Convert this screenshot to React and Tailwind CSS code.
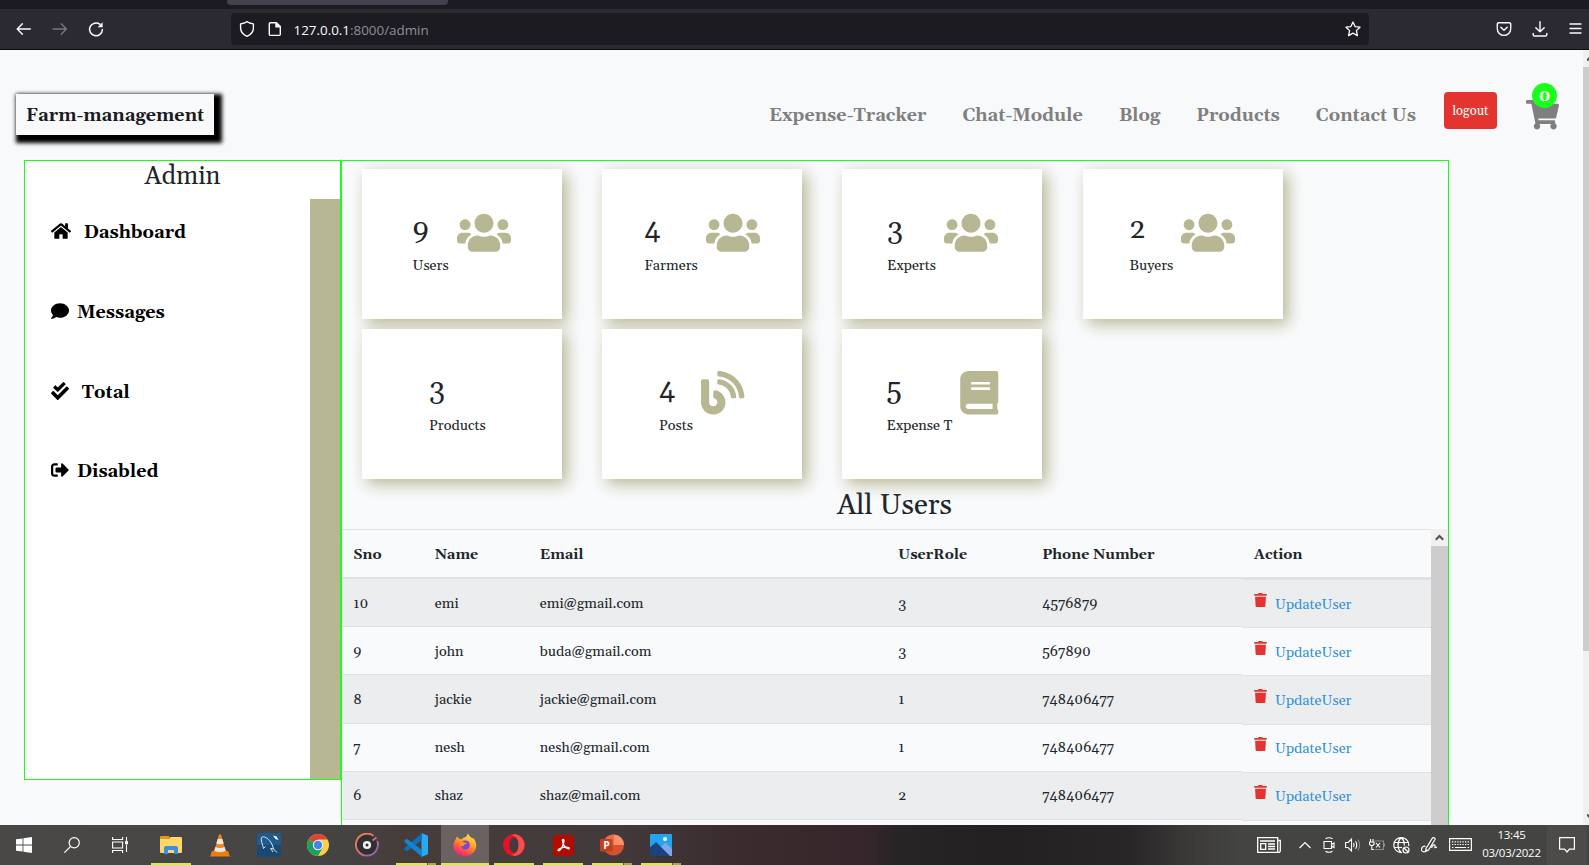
import {
  FaUsers,
  FaBlog,
  FaBook,
  FaHome,
  FaComment,
  FaCheckDouble,
  FaSignOutAlt,
  FaTrash,
  FaShoppingCart,
} from 'react-icons/fa';

/* ---------- browser chrome ---------- */

function BrowserBar() {
  return (
    <header className="h-[50px] shrink-0 border-b border-[#0c0c0d] bg-[#2b2a33] text-[#fbfbfe]">
      <div className="h-[9px] bg-[#1c1b22] pl-[227px]">
        <div className="h-[5px] w-[221px] rounded-b-[4px] bg-[#42414d]" />
      </div>
      <div className="flex h-10 items-center pl-4">
        <svg className="h-4 w-4" viewBox="0 0 16 16" fill="none" stroke="currentColor" strokeWidth="1.4" strokeLinecap="round" strokeLinejoin="round">
          <path d="M14.3 8H1.2M6.4 2.8 1.2 8l5.2 5.2" />
        </svg>
        <svg className="ml-5 h-4 w-4 text-[#77767e]" viewBox="0 0 16 16" fill="none" stroke="currentColor" strokeWidth="1.4" strokeLinecap="round" strokeLinejoin="round">
          <path d="M1 8h13.4M9.2 2.8 14.4 8l-5.2 5.2" />
        </svg>
        <svg className="ml-5 h-4 w-4" viewBox="0 0 16 16" fill="none" stroke="currentColor" strokeWidth="1.5" strokeLinecap="round">
          <path d="M11.800 3.200A6.400 6.400 0 1 0 14.400 8.500" />
          <path d="M14.600 1.300v5h-5z" fill="currentColor" stroke="none" />
        </svg>
        <div className="ml-[127px] flex h-8 w-[1138px] items-center rounded-[4px] bg-[#1c1b22] pl-2">
          <svg className="h-4 w-4" viewBox="0 0 16 16" fill="none" stroke="currentColor" strokeWidth="1.4" strokeLinejoin="round">
            <path d="M8 .6 10.500 2l3.900.9v4c0 3.800-2.400 6.600-6.400 8.500-4-1.900-6.400-4.700-6.400-8.500v-4L5.500 2z" />
          </svg>
          <svg className="ml-3 h-4 w-4" viewBox="0 0 16 16" fill="none" stroke="currentColor" strokeWidth="1.4" strokeLinejoin="round">
            <path d="M3.500 1.700h6l3.800 3.800v7.700a1.200 1.200 0 0 1-1.200 1.200H3.500a1.200 1.200 0 0 1-1.200-1.200V2.900a1.200 1.200 0 0 1 1.200-1.200z" />
            <path d="M9 1.700v4.200h4.200z" fill="currentColor" />
          </svg>
          <span className="mt-0.5 ml-[10.500px] font-['Open_Sans',sans-serif] text-[13.400px] text-[#8f8e96]">
            <span className="text-[#fbfbfe]">127.0.0.1</span>:8000/admin
          </span>
          <svg className="mr-2 ml-auto h-4 w-4" viewBox="0 0 16 16" fill="none" stroke="currentColor" strokeWidth="1.3" strokeLinejoin="round">
            <path d="m8 1 2.100 4.600 4.900.6-3.600 3.400 1 5L8 12.100l-4.400 2.500 1-5L1 6.200l4.900-.6z" />
          </svg>
        </div>
        <svg className="ml-[127px] h-4 w-4" viewBox="0 0 16 16" fill="none" stroke="currentColor" strokeWidth="1.4" strokeLinecap="round" strokeLinejoin="round">
          <path d="M2.500 1.800h11a1.200 1.200 0 0 1 1.200 1.200v4.700a6.700 6.700 0 0 1-13.400 0V3a1.200 1.200 0 0 1 1.200-1.200z" />
          <path d="M4.800 6.200 8 9.300l3.200-3.100" />
        </svg>
        <svg className="ml-5 h-4 w-4" viewBox="0 0 16 16" fill="none" stroke="currentColor" strokeWidth="1.4" strokeLinecap="round" strokeLinejoin="round">
          <path d="M8 .8v10M3.800 6.700 8 10.800l4.200-4.100M1.200 12.500v1.200c0 .8.500 1.300 1.300 1.300h11c.8 0 1.300-.5 1.300-1.300v-1.200" />
        </svg>
        <svg className="ml-[21px] h-4 w-[13px]" viewBox="0 0 13 16" fill="none" stroke="currentColor" strokeWidth="1.3" strokeLinecap="round">
          <path d="M1 3h11M1 7.500h11M1 12h11" />
        </svg>
      </div>
    </header>
  );
}

/* ---------- site header ---------- */

function SiteHeader() {
  return (
    <div className="flex h-[105px] items-start bg-[#f8f9fb] pl-4 text-[18px] leading-7 font-bold">
      <a className="mt-11 h-[41px] w-[198px] bg-[#f8f9fb] pt-2 pl-2.5 text-[#1b1b1e] shadow-[4px_4px_4px_4px_#000]">
        Farm-management
      </a>
      <nav className="mt-[52px] ml-[555px] flex w-[647px] justify-between text-[#7f7f7f]">
        <a>Expense-Tracker</a>
        <a>Chat-Module</a>
        <a>Blog</a>
        <a>Products</a>
        <a>Contact Us</a>
      </nav>
      <button className="mt-[42px] ml-7 h-[37px] w-[53px] rounded-[4px] bg-[#e3342f] text-[12.960px] font-normal text-white">
        logout
      </button>
      <div className="relative mt-[50px] ml-[29px] text-[#7f7f7f]">
        <FaShoppingCart className="h-[29.500px] w-[33px]" />
        <span className="absolute -top-[17.500px] left-[6px] flex h-[25px] w-[25px] items-center justify-center rounded-full bg-[#1aff1a] pt-0.5 text-[16px] leading-none text-white">
          0
        </span>
      </div>
    </div>
  );
}

/* ---------- sidebar ---------- */

function SideLink({ icon: Icon, label, iconClass, className }) {
  return (
    <li className={`flex h-20 items-start text-[18px] leading-7 font-bold text-black ${className ?? ''}`}>
      <Icon className={`mt-[3px] h-[18px] ${iconClass}`} />
      {label}
    </li>
  );
}

function Sidebar() {
  return (
    <aside className="flex h-[620px] w-[317px] shrink-0 flex-col border border-[#1aff1a] bg-white">
      <h3 className="h-[38px] pt-px text-center text-[25.2px] leading-[30px]">Admin</h3>
      <div className="flex flex-1">
        <ul className="flex-1 pt-5 pl-[26px]">
          <SideLink icon={FaHome} label="Dashboard" iconClass="mr-[12.750px] w-[20px]" />
          <SideLink icon={FaComment} label="Messages" iconClass="mr-2 w-[18px]" />
          <SideLink icon={FaCheckDouble} label="Total" iconClass="mr-[12.750px] w-[18px]" />
          <SideLink icon={FaSignOutAlt} label="Disabled" iconClass="mr-2 w-[18px]" className="-mt-px" />
        </ul>
        <div className="w-[30px] bg-[#b8b794]" />
      </div>
    </aside>
  );
}

/* ---------- cards ---------- */

const cards = [
  { value: 9, label: 'Users', icon: FaUsers, pad: 'pl-[50.500px]', iconBox: 'left-[94.500px] w-[54px]' },
  { value: 4, label: 'Farmers', icon: FaUsers, pad: 'pl-[42.250px]', iconBox: 'left-[103.500px] w-[54px]' },
  { value: 3, label: 'Experts', icon: FaUsers, pad: 'pl-[45px]', iconBox: 'left-[101.500px] w-[54px]' },
  { value: 2, label: 'Buyers', icon: FaUsers, pad: 'pl-[46.500px]', iconBox: 'left-[98px] w-[54px]' },
  { value: 3, label: 'Products', icon: null, pad: 'pl-[67px]', iconBox: '' },
  { value: 4, label: 'Posts', icon: FaBlog, pad: 'pl-[57px]', iconBox: 'left-[99px] w-[43.500px]' },
  { value: 5, label: 'Expense T', icon: FaBook, pad: 'pl-[44.500px]', iconBox: 'left-[118px] w-[38.500px]' },
];

function StatCard({ value, label, icon: Icon, pad, iconBox }) {
  return (
    <div className={`relative h-[150px] w-[200px] bg-white pt-11 shadow-[5px_5px_15px_#b8b794] ${pad}`}>
      <h2 className="h-[42px] text-[28.8px] leading-[34px]">{value}</h2>
      <span className="block text-[14.4px] leading-[23px]">{label}</span>
      {Icon && <Icon className={`absolute top-[42px] h-[43.500px] text-[#b8b794] ${iconBox}`} />}
    </div>
  );
}

/* ---------- table ---------- */

const users = [
  { cells: ['10', 'emi', 'emi@gmail.com', '3', '4576879'], row: 'h-12', pad: 'pt-3.5' },
  { cells: ['9', 'john', 'buda@gmail.com', '3', '567890'], row: 'h-12', pad: 'pt-3.5' },
  { cells: ['8', 'jackie', 'jackie@gmail.com', '1', '748406477'], row: 'h-[49px]', pad: 'pt-3.5' },
  { cells: ['7', 'nesh', 'nesh@gmail.com', '1', '748406477'], row: 'h-12', pad: 'pt-[13px]' },
  { cells: ['6', 'shaz', 'shaz@mail.com', '2', '748406477'], row: 'h-12', pad: 'pt-[13px]' },
];

const columns = 'grid grid-cols-[81.500px_105px_358.500px_144px_211px_1fr]';

function UserTable() {
  return (
    <div className="flex w-[1106px] flex-1 overflow-hidden">
      <div className="w-[1089px] border-t border-[#dee2e6] text-[14.4px] leading-[23px]">
        <div className={`${columns} h-[49px] border-b-2 border-[#dee2e6] pt-3.5 font-bold`}>
          <span className="pl-[11.250px]">Sno</span>
          <span className="pl-[11.250px]">Name</span>
          <span className="pl-[11.250px]">Email</span>
          <span className="pl-[11.250px]">UserRole</span>
          <span className="pl-[11.250px]">Phone Number</span>
          <span className="pl-3">Action</span>
        </div>
        {users.map(({ cells, row, pad }, i) => {
          const tone = i % 2 === 0 ? 'bg-[#ebedef]' : 'bg-[#f8fafc]';
          return (
            <div key={cells[0]} className={`${columns} ${row}`}>
              {cells.map((value, c) => (
                <span key={c} className={`border-b border-[#dee2e6] pl-[11.250px] ${pad} ${tone}`}>
                  {value}
                </span>
              ))}
              <div
                className={`-mb-px flex items-start border-b border-[#dee2e6] pl-3 ${pad} ${i === 0 ? 'border-t' : 'mt-px'} ${tone}`}
              >
                <FaTrash className="-mt-[1.500px] h-[14.500px] w-[13px] text-[#e3342f]" />
                <a className="ml-2 text-[#3490dc]">UpdateUser</a>
              </div>
            </div>
          );
        })}
      </div>
      <div className="w-[17px] bg-[#cdcdcd]">
        <div className="flex h-[17px] items-center justify-center bg-[#f0f0f0] pb-px">
          <svg className="h-[7px] w-[9px]" viewBox="0 0 9 7" fill="none" stroke="#505050" strokeWidth="2">
            <path d="M.8 5.800 4.500 2l3.700 3.800" />
          </svg>
        </div>
      </div>
    </div>
  );
}

/* ---------- taskbar ---------- */

function Slot({ children, run, active }) {
  return (
    <div className={`relative flex h-10 w-12 items-center justify-center ${active ? 'bg-[#696261]' : ''}`}>
      {children}
      {run && (
        <div className={`absolute bottom-0 flex h-0.5 ${active ? 'w-12' : 'w-10'} bg-[#dbe35f]`}>
          {run === 'multi' && <div className="ml-auto w-[9px] border-l border-[#5a5840] bg-[#a8a852]" />}
        </div>
      )}
    </div>
  );
}

function Taskbar() {
  return (
    <footer className="flex h-10 shrink-0 bg-[linear-gradient(90deg,#494846_0px,#454443_330px,#463d3b_400px,#42393a_620px,#3a2b2e_740px,#34262a_870px,#262425_900px,#222021_1000px,#282627_1130px,#3b3a38_1190px,#444442_1240px,#444442_1589px)] text-white">
      <Slot>
        <svg className="h-4 w-4" viewBox="0 0 16 16" fill="currentColor">
          <path d="M0 2.300 6.600 1.400v6.100H0zM7.400 1.300 16 0v7.500H7.400zM0 8.400h6.600v6.200L0 13.700zM7.400 8.400H16V16l-8.600-1.200z" />
        </svg>
      </Slot>
      <Slot>
        <svg className="h-4 w-4" viewBox="0 0 16 16" fill="none" stroke="currentColor" strokeWidth="1.200">
          <circle cx="10.200" cy="5.800" r="5.100" />
          <path d="M6.500 9.500.4 15.600" />
        </svg>
      </Slot>
      <Slot>
        <svg className="h-4 w-4" viewBox="0 0 16 16" fill="none" stroke="currentColor" strokeWidth="1.100">
          <path d="M.6 0v2.500h10V0M.6 16v-2.500h10V16M.6 5h10v6H.6zM14.500 0v4M14.500 7.500V15" />
          <path d="M13 4.200h3v3h-3z" fill="currentColor" stroke="none" />
        </svg>
      </Slot>
      <div className="ml-[3px] flex gap-px">
        <Slot run="one">
          <svg className="h-[18px] w-[22px]" viewBox="0 0 22 18">
            <path d="M0 1a1 1 0 0 1 1-1h8l1 3H0z" fill="#e09a0a" />
            <path d="M0 3h9l1.500-2H21a1 1 0 0 1 1 1v14a1 1 0 0 1-1 1H1a1 1 0 0 1-1-1z" fill="#ffd667" />
            <path d="M4 18v-6a2 2 0 0 1 2-2h10a2 2 0 0 1 2 2v6h-4v-4H8v4z" fill="#3a8fe0" />
          </svg>
        </Slot>
        <Slot>
          <svg className="h-[23px] w-5" viewBox="0 0 20 23">
            <path d="M2 17h16l2 5.500H0z" fill="#f07c0c" />
            <path d="M9 .5h2L16 18q-6 2.500-12 0z" fill="#f58414" />
            <path d="m7.700 5 4.600 0 1.400 4.500q-3.700 1.400-7.400 0zM5.300 13q4.700 1.800 9.400 0l1.100 3.800q-5.800 2.400-11.600 0z" fill="#e8e8e8" />
          </svg>
        </Slot>
        <Slot>
          <svg className="h-6 w-6" viewBox="0 0 24 24">
            <rect width="24" height="24" rx="2.500" fill="#1f5a8c" />
            <path d="M0 12h24v9.500a2.500 2.500 0 0 1-2.500 2.500h-19A2.500 2.500 0 0 1 0 21.500z" fill="#194a75" />
            <path d="M6.500 15.500C5.500 11 3.500 7.500 4.500 4.500 5.500 3 9.500 4 12.500 7.500c2.500 3 3.500 6 4 8.500l3.500 3.500M6.500 15.500l2-2M16.500 16l-3-.5 2.500 3.500" fill="none" stroke="#d9e6f0" strokeWidth="1" />
            <path d="M16 2.500 19.500 3.500 21.500 7 18.500 6z" fill="#fff" />
          </svg>
        </Slot>
        <Slot>
          <svg className="h-[22px] w-[22px]" viewBox="0 0 22 22">
            <circle cx="11" cy="11" r="11" fill="#fdd04b" />
            <path d="M11 11 1.500 5.500A11 11 0 0 1 20.500 5.500H11z" fill="#dd4337" />
            <path d="M1.500 5.500A11 11 0 0 0 11 22l4.700-8.300L11 11z" fill="#1f9f5c" />
            <circle cx="11" cy="11" r="5.200" fill="#f5f5f5" />
            <circle cx="11" cy="11" r="4.200" fill="#4285f0" />
          </svg>
        </Slot>
        <Slot>
          <svg className="h-6 w-6" viewBox="0 0 24 24">
            <defs>
              <linearGradient id="groove" x1="0" y1="0" x2="1" y2="1">
                <stop offset="0" stopColor="#f58a3c" />
                <stop offset=".5" stopColor="#d96c7c" />
                <stop offset="1" stopColor="#7a62d8" />
              </linearGradient>
            </defs>
            <circle cx="12" cy="12" r="10" fill="#303030" />
            <path d="M18.500 2.800A11 11 0 1 0 22.300 8M17.500 7.500l4-3" fill="none" stroke="url(#groove)" strokeWidth="1.800" />
            <circle cx="12" cy="12" r="2.800" fill="#303030" stroke="#f2f2f2" strokeWidth="2.600" />
          </svg>
        </Slot>
        <Slot run="multi">
          <svg className="h-6 w-6" viewBox="0 0 24 24">
            <path d="M17.500 0 24 2.800v18.400L17.500 24z" fill="#2aa8f0" />
            <path d="M18 0v7L3 18.300.5 16.500V15z" fill="#0f6fb8" />
            <path d="M18 24v-7L3 5.700.5 7.500V9z" fill="#1484cf" />
          </svg>
        </Slot>
        <Slot run="one" active>
          <svg className="h-6 w-6" viewBox="0 0 24 24">
            <defs>
              <linearGradient id="fox" x1=".8" y1="0" x2=".3" y2="1">
                <stop offset="0" stopColor="#fff04a" />
                <stop offset=".45" stopColor="#ff9a28" />
                <stop offset=".8" stopColor="#ff4155" />
                <stop offset="1" stopColor="#e8207e" />
              </linearGradient>
            </defs>
            <path d="M4 3.500 6.500 6 9 6.200C10 4 12.500 4.500 13 4L15 .5c1 2.500 3 3.500 4.300 5 .6-.1.700-.8.700-.8 4.500 5 4 11 .7 14.500C14 26 .7 24 .5 12.500.4 10 1.400 8.500 2 7.500z" fill="url(#fox)" />
            <circle cx="12.300" cy="12" r="4.500" fill="#7846d8" />
            <path d="M6 9c2-1.500 4-.5 5 .5l3 .3c-.5 2-3.500 1.500-3.500 3.500-2 .5-4.500-1.300-4.500-4.300z" fill="#ff9224" />
          </svg>
        </Slot>
        <Slot run="one">
          <svg className="h-[22px] w-[22px]" viewBox="0 0 22 22">
            <path d="M11 0a11 11 0 1 0 0 22 11 11 0 0 0 0-22zm0 3.500c2.700 0 4.500 3.300 4.500 7.500s-1.800 7.500-4.500 7.500S6.500 15.200 6.500 11 8.300 3.500 11 3.500z" fill="#e3142a" />
            <path d="M12 .1A11 11 0 0 1 12 21.900c-1 0-2.500-.7-3.500-2 4 1.500 7-3 7-8.900s-3-10.400-7-8.900C9.500.8 11 .1 12 .1z" fill="#f0504e" />
          </svg>
        </Slot>
        <Slot run="one">
          <svg className="h-[21px] w-[21px]" viewBox="0 0 21 21">
            <rect width="21" height="21" rx="3.500" fill="#b30b00" />
            <path d="M10 4.500c1.800 0 .8 3.500-.5 6.500-1.200 2.800-2.800 5-4 4.700-1.800-.6 1.500-2.700 5.200-3.300 3.400-.6 6 0 5.600 1.100-.5 1.200-3.300-.3-5-2.700C9.800 8.500 8.800 4.700 10 4.500z" fill="none" stroke="#fff" strokeWidth="1.300" />
          </svg>
        </Slot>
        <Slot run="multi">
          <svg className="h-[22px] w-6" viewBox="0 0 24 22">
            <circle cx="13.500" cy="11" r="10.500" fill="#d35230" />
            <path d="M13.500.5A10.500 10.500 0 0 1 24 11H13.500z" fill="#ff8f6b" />
            <path d="M13.500.5A10.500 10.500 0 0 0 3 11h10.500z" fill="#ed6c47" />
            <rect y="5" width="12.500" height="12.500" rx="1" fill="#c43e1c" />
            <text x="3.300" y="15" fill="#fff" fontSize="10.500" fontWeight="700" fontFamily="Open Sans, sans-serif">P</text>
          </svg>
        </Slot>
        <Slot run="multi">
          <svg className="h-[22px] w-[22px]" viewBox="0 0 22 22">
            <rect width="22" height="22" rx="1" fill="#25a4ee" />
            <path d="m10 14 5.500-5.500L22 15v7H10z" fill="#7ea6e8" />
            <path d="M0 13.500 6 8l14 14H1a1 1 0 0 1-1-1z" fill="#1c4182" />
            <circle cx="15" cy="5" r="2" fill="#fff" />
          </svg>
        </Slot>
      </div>

      <div className="ml-auto flex items-center">
        <svg className="h-4 w-6" viewBox="0 0 24 16" fill="none" stroke="currentColor" strokeWidth="1.300">
          <path d="M.7.700h20v14.600h-20zM20.700 3.500h2.600v10a1.800 1.800 0 0 1-2.600 1.800M3 4h15M3.700 6.700h5v5.600h-5zM11 7h7M11 9.500h7M11 12h7" />
        </svg>
        <svg className="ml-[18px] h-2 w-3" viewBox="0 0 12 8" fill="none" stroke="currentColor" strokeWidth="1.200">
          <path d="M.5 7 6 1.500 11.500 7" />
        </svg>
        <svg className="ml-3 h-4 w-3" viewBox="0 0 12 16" fill="none" stroke="currentColor" strokeWidth="1.100">
          <path d="M2.500 1.800Q6-.4 9.500 1.800M2.500 14.200q3.500 2.200 7 0M1 4.500h7.500v7H1zM8.500 7.500 11 6v4.500L8.500 9" />
        </svg>
        <svg className="ml-2.5 h-4 w-4" viewBox="0 0 16 16" fill="none" stroke="currentColor" strokeWidth="1.100">
          <path d="M.6 5.500h2.500L6.500 2v12L3.100 10.500H.6zM8.500 6q1.200 2 0 4M10.500 4.200q2.500 3.800 0 7.600" />
          <path d="M12.800 2.500q3.600 5.500 0 11" stroke="#8c8c8a" />
        </svg>
        <svg className="ml-2 h-4 w-4" viewBox="0 0 16 16" fill="none" stroke="currentColor" strokeWidth="1.100">
          <path d="M1.500 2v3M4 2v3M.5 5h4.500v2.500L2.800 9 .5 7.500zM2.800 9v3.500H5M7 6l4 4.500M11 6l-4 4.500" />
          <path d="M6 4h8.500v8.500H6M15.500 6.500v3" stroke="#8c8c8a" />
        </svg>
        <svg className="ml-2 h-[17px] w-[17px]" viewBox="0 0 17 17" fill="none" stroke="currentColor" strokeWidth="1.200">
          <path d="M9 15.500A7.500 7.500 0 1 1 15.700 9M.8 5.500h14.500M.8 10.500H9M8.200.5C4 4.500 4 11.500 8 15.500M8.200.5q3.500 3.300 3 8" />
          <circle cx="13" cy="13" r="3" />
          <path d="m11 11 4 4" />
        </svg>
        <svg className="ml-[11px] h-4 w-4" viewBox="0 0 16 16" fill="none" stroke="currentColor" strokeWidth="1.200">
          <path d="M4.500 9.500C2 8-.5 12 1 14s4.500 0 5-1.500M5 11.500 11.500 1c1-1 3 .2 2.500 1.500L7.500 13l-2.800 1.500zM10.500 11c1-3 3-4 3.500-2.500s-1.500 3 2 1.500" />
        </svg>
        <svg className="mb-0.5 ml-3 h-[13px] w-[23px]" viewBox="0 0 23 13" fill="none" stroke="currentColor" strokeWidth="1.200">
          <path d="M.6.600h21.800v11.800H.6z" />
          <path d="M3 3.800h17M3 6.500h17" strokeDasharray="1.300 1.300" />
          <path d="M3 9.500h1.500M6 9.500h11M18.500 9.500H20" />
        </svg>
        <div className="-mt-0.5 ml-2.5 w-[59px] text-center font-['Open_Sans',sans-serif] text-[11.500px] leading-[18px] tracking-[-0.250px] whitespace-nowrap">
          <div>13:45</div>
          <div>03/03/2022</div>
        </div>
      </div>
      <div className="mr-0.5 ml-[6px] flex w-10 items-center justify-center bg-[#4c4b49]">
        <svg className="h-4 w-4" viewBox="0 0 16 16" fill="none" stroke="currentColor" strokeWidth="1.200">
          <path d="M.6.600h14.800v11.500h-5L8 15l-2.400-2.900h-5z" />
        </svg>
      </div>
    </footer>
  );
}

/* ---------- page ---------- */

function PageScrollbar() {
  return (
    <div className="flex w-[6px] shrink-0 flex-col overflow-hidden bg-[#f0f0f0]">
      <svg className="ml-1 h-[17px] w-[9px]" viewBox="0 0 9 17" fill="none" stroke="#505050" strokeWidth="2">
        <path d="M0 10.500 3.700 6.700l3.700 3.800" />
      </svg>
      <div className="h-[584px] shrink-0 bg-[#cdcdcd]" />
      <svg className="mt-auto mb-0.5 ml-1 h-[10px] w-[9px]" viewBox="0 0 9 10" fill="none" stroke="#505050" strokeWidth="2">
        <path d="M0 1.500 3.700 5.300l3.700-3.800" />
      </svg>
    </div>
  );
}

export default function App() {
  return (
    <div className="flex h-[865px] w-[1589px] flex-col overflow-hidden bg-[#f8fafc] font-['Gelasio',Georgia,serif] text-[#212529]">
      <BrowserBar />
      <div className="flex h-[775px]">
        <main className="flex flex-1 flex-col overflow-hidden">
          <SiteHeader />
          <div className="flex min-h-0 flex-1 items-start pt-[5px] pl-6">
            <Sidebar />
            <section className="flex h-full w-[1108px] flex-col border border-b-0 border-[#1aff1a]">
              <div className="grid shrink-0 grid-cols-[240px_240px_241px_240px] gap-y-2.5 pt-2 pl-5">
                {cards.map((card) => (
                  <StatCard key={card.label + card.value} {...card} />
                ))}
              </div>
              <h2 className="h-[50px] shrink-0 pt-[9px] pr-px text-center text-[28.8px] leading-[35px]">
                All Users
              </h2>
              <UserTable />
            </section>
          </div>
        </main>
        <PageScrollbar />
      </div>
      <Taskbar />
    </div>
  );
}
